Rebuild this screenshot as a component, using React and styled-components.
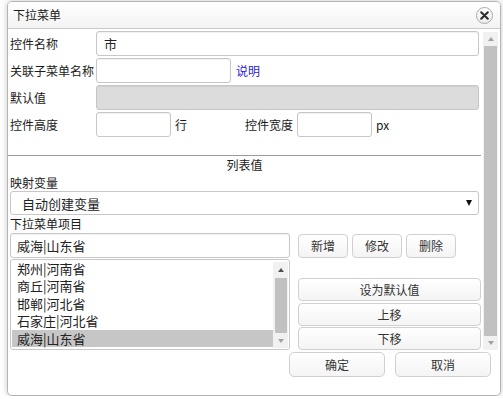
import React from "react";
import styled, { createGlobalStyle, css } from "styled-components";

const GlobalStyle = createGlobalStyle`
  html, body {
    margin: 0;
    background: #fff;
  }
  body {
    font-family: "Noto Sans CJK SC", "Noto Sans", sans-serif;
    font-size: 12px;
    color: #1a1a1a;
  }
  input, button {
    font-family: inherit;
  }
`;

const Page = styled.div`
  padding: 1px 0 0 7px;
`;

const Dialog = styled.div`
  width: 494px;
  height: 395px;
  box-sizing: border-box;
  border: 1px solid #b5b5b5;
  border-radius: 5px;
  box-shadow: 0 0 6px rgba(0, 0, 0, 0.22);
  background: #fff;
  display: flex;
  flex-direction: column;
  overflow: hidden;
`;

const TitleBar = styled.div`
  height: 26px;
  flex: none;
  display: flex;
  align-items: center;
  justify-content: space-between;
  padding: 0 7px 0 5px;
  background: linear-gradient(#ffffff, #f3f3f3);
  border-bottom: 1px solid #c9c9c9;
`;

const Title = styled.span`
  font-size: 12px;
  line-height: 16px;
`;

const CloseButton = styled.button`
  width: 17px;
  height: 17px;
  padding: 0;
  border: 1px solid #a9a9a9;
  border-radius: 50%;
  background: linear-gradient(#ffffff, #ececec);
  display: flex;
  align-items: center;
  justify-content: center;
`;

const Body = styled.div`
  height: 321px;
  flex: none;
  display: flex;
`;

const Content = styled.div`
  flex: 1;
  min-width: 0;
  overflow: hidden;
  padding: 2px 4px 0 2px;
  display: flex;
  flex-direction: column;
`;

const Rows = styled.div`
  display: flex;
  flex-direction: column;
  gap: 2px;
`;

const Row = styled.div`
  display: flex;
  align-items: center;
  height: 25px;
`;

const Label = styled.span`
  flex: none;
  width: ${({ $width }) => $width || 86}px;
  font-size: 12px;
  white-space: nowrap;
`;

const Unit = styled.span`
  flex: none;
  width: ${({ $width }) => ($width ? `${$width}px` : "auto")};
  box-sizing: border-box;
  padding-left: 4px;
  font-size: 12px;
`;

const Link = styled.span`
  margin-left: 5px;
  color: #2b22d6;
  font-size: 12px;
`;

const TextInput = styled.input`
  box-sizing: border-box;
  height: 25px;
  ${({ $width }) =>
    $width
      ? css`
          width: ${$width}px;
          flex: none;
        `
      : css`
          flex: 1;
          min-width: 0;
        `}
  padding: 0 0 0 ${({ $pad }) => $pad || 7}px;
  border: 1px solid #c7c7c7;
  border-radius: 3px;
  box-shadow: inset 0 1px 1px rgba(0, 0, 0, 0.06);
  background: ${({ disabled }) => (disabled ? "#dcdcdc" : "#fff")};
  font-size: 13px;
  color: #222;
  outline: none;
`;

const Divider = styled.div`
  height: 1px;
  margin: 18px -2px 0 -2px;
  background: #9c9c9c;
`;

const SectionTitle = styled.div`
  text-align: center;
  line-height: 18px;
  font-size: 12px;
`;

const Caption = styled.div`
  line-height: ${({ $h }) => $h}px;
  font-size: 12px;
`;

const Select = styled.div`
  box-sizing: border-box;
  height: 24px;
  display: flex;
  align-items: center;
  justify-content: space-between;
  padding: 0 6px 0 11px;
  border: 1px solid #c7c7c7;
  border-radius: 3px;
  font-size: 13px;
  color: #222;
`;

const Caret = styled.span`
  width: 0;
  height: 0;
  border-left: 3.5px solid transparent;
  border-right: 3.5px solid transparent;
  border-top: 6px solid #111;
`;

const ItemsGrid = styled.div`
  display: grid;
  grid-template-columns: 280px 183px;
  column-gap: 8px;
  row-gap: 1px;
`;

const ButtonRow = styled.div`
  display: flex;
  gap: 4px;
  align-items: center;
`;

const Button = styled.button`
  box-sizing: border-box;
  height: ${({ $h }) => $h || 24}px;
  width: ${({ $w }) => ($w ? `${$w}px` : "100%")};
  padding: 0;
  border: 1px solid #d0d0d0;
  border-radius: ${({ $r }) => $r || 4}px;
  background: linear-gradient(#ffffff, #f4f4f4);
  color: #333;
  font-size: 12px;
`;

const ListBox = styled.div`
  box-sizing: border-box;
  height: 91px;
  display: flex;
  border: 1px solid #c7c7c7;
  border-radius: 3px;
  padding-left: 1px;
`;

const Items = styled.div`
  flex: 1;
  min-width: 0;
`;

const Item = styled.div`
  height: 17.4px;
  line-height: 17.4px;
  padding-left: 5px;
  font-size: 13px;
  color: #222;
  background: ${({ $selected }) => ($selected ? "#c6c6c6" : "transparent")};
`;

const Stack = styled.div`
  align-self: end;
  display: flex;
  flex-direction: column;
  gap: 1.5px;
`;

const Scrollbar = styled.div`
  flex: none;
  width: ${({ $w }) => $w}px;
  margin: ${({ $m }) => $m};
  display: flex;
  flex-direction: column;
  background: #f1f1f1;
`;

const ArrowBox = styled.div`
  flex: none;
  height: ${({ $h }) => $h}px;
  display: flex;
  align-items: center;
  justify-content: center;
`;

const Arrow = styled.span`
  width: 0;
  height: 0;
  border-left: 3.5px solid transparent;
  border-right: 3.5px solid transparent;
  ${({ $dir, $color }) =>
    $dir === "up"
      ? css`
          border-bottom: 4px solid ${$color};
        `
      : css`
          border-top: 4px solid ${$color};
        `}
`;

const Thumb = styled.div`
  flex: 1;
  margin: 0 ${({ $side }) => $side}px;
  background: #c1c1c1;
`;

const Footer = styled.div`
  flex: none;
  display: flex;
  justify-content: flex-end;
  gap: 10px;
  padding: 2px 9px 0 0;
`;

const ScrollTrack = ({ width, margin, btnTop, btnBottom, upColor, downColor, side }) => (
  <Scrollbar $w={width} $m={margin}>
    <ArrowBox $h={btnTop}>
      <Arrow $dir="up" $color={upColor} />
    </ArrowBox>
    <Thumb $side={side} />
    <ArrowBox $h={btnBottom}>
      <Arrow $dir="down" $color={downColor} />
    </ArrowBox>
  </Scrollbar>
);

const items = ["郑州|河南省", "商丘|河南省", "邯郸|河北省", "石家庄|河北省", "威海|山东省"];

export default function App() {
  return (
    <>
      <GlobalStyle />
      <Page>
        <Dialog>
          <TitleBar>
            <Title>下拉菜单</Title>
            <CloseButton aria-label="关闭">
              <svg width="9" height="9" viewBox="0 0 9 9">
                <path d="M1.2 1.2 L7.8 7.8 M7.8 1.2 L1.2 7.8" stroke="#2a2a2a" strokeWidth="2" strokeLinecap="round" />
              </svg>
            </CloseButton>
          </TitleBar>
          <Body>
            <Content>
              <Rows>
                <Row>
                  <Label>控件名称</Label>
                  <TextInput defaultValue="市" />
                </Row>
                <Row>
                  <Label>关联子菜单名称</Label>
                  <TextInput $width={135} />
                  <Link>说明</Link>
                </Row>
                <Row>
                  <Label>默认值</Label>
                  <TextInput disabled />
                </Row>
                <Row>
                  <Label>控件高度</Label>
                  <TextInput $width={75} />
                  <Unit $width={74}>行</Unit>
                  <Label $width={52}>控件宽度</Label>
                  <TextInput $width={75} />
                  <Unit>px</Unit>
                </Row>
              </Rows>
              <Divider />
              <SectionTitle>列表值</SectionTitle>
              <Caption $h={17}>映射变量</Caption>
              <Select>
                <span>自动创建变量</span>
                <Caret />
              </Select>
              <Caption $h={18}>下拉菜单项目</Caption>
              <ItemsGrid>
                <TextInput defaultValue="威海|山东省" $pad={6} />
                <ButtonRow>
                  <Button $w={50}>新增</Button>
                  <Button $w={50}>修改</Button>
                  <Button $w={50}>删除</Button>
                </ButtonRow>
                <ListBox>
                  <Items>
                    {items.map((item, i) => (
                      <Item key={item} $selected={i === items.length - 1}>
                        {item}
                      </Item>
                    ))}
                  </Items>
                  <ScrollTrack
                    width={15}
                    margin="2px 1px 1px 0"
                    btnTop={16}
                    btnBottom={15}
                    upColor="#505050"
                    downColor="#a3a3a3"
                    side={1.5}
                  />
                </ListBox>
                <Stack>
                  <Button $h={23}>设为默认值</Button>
                  <Button $h={23}>上移</Button>
                  <Button $h={23}>下移</Button>
                </Stack>
              </ItemsGrid>
            </Content>
            <ScrollTrack
              width={15}
              margin="3px 2px 0 0"
              btnTop={14}
              btnBottom={14}
              upColor="#a0a0a0"
              downColor="#a0a0a0"
              side={1}
            />
          </Body>
          <Footer>
            <Button $w={96} $h={25} $r={5}>确定</Button>
            <Button $w={96} $h={25} $r={5}>取消</Button>
          </Footer>
        </Dialog>
      </Page>
    </>
  );
}
